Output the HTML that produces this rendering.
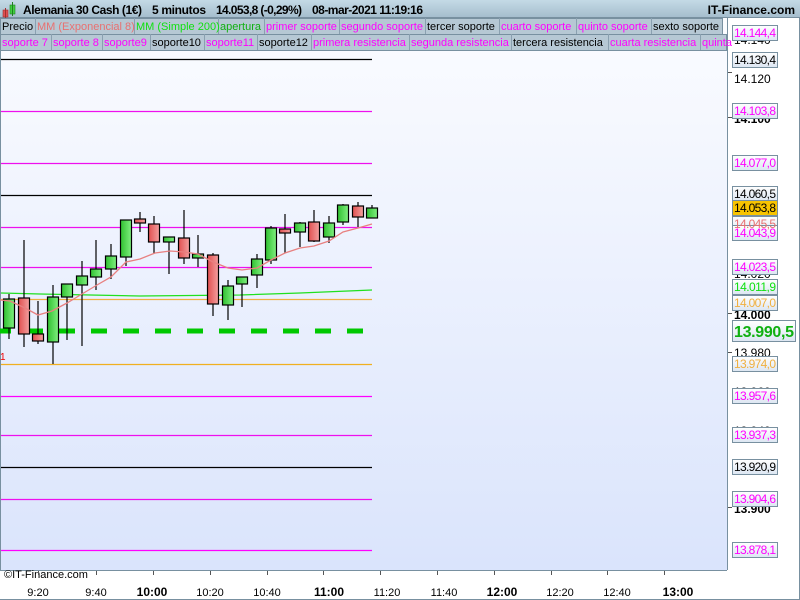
<!DOCTYPE html>
<html><head><meta charset="utf-8"><style>
html,body{margin:0;padding:0;width:800px;height:600px;overflow:hidden;background:#fff}
svg{display:block;font-family:"Liberation Sans",sans-serif}
</style></head><body>
<svg width="800" height="600" viewBox="0 0 800 600" xmlns="http://www.w3.org/2000/svg">
<defs>
<linearGradient id="bg" x1="0" y1="0" x2="0" y2="1"><stop offset="0" stop-color="#fbfcff"/><stop offset="1" stop-color="#dae4fc"/></linearGradient>
<linearGradient id="hd" x1="0" y1="0" x2="0" y2="1"><stop offset="0" stop-color="#c4dae6"/><stop offset="1" stop-color="#a4bccc"/></linearGradient>
<linearGradient id="gc" x1="0" y1="0" x2="1" y2="0"><stop offset="0" stop-color="#30c030"/><stop offset="1" stop-color="#80f080"/></linearGradient>
<linearGradient id="rc" x1="0" y1="0" x2="1" y2="0"><stop offset="0" stop-color="#e05050"/><stop offset="1" stop-color="#f4a0a0"/></linearGradient>
<linearGradient id="lb" x1="0" y1="0" x2="0" y2="1"><stop offset="0" stop-color="#ffffff"/><stop offset="1" stop-color="#dce6f2"/></linearGradient>
</defs>
<rect x="0" y="0" width="800" height="600" fill="#fff"/>
<rect x="0" y="18" width="727" height="552" fill="url(#bg)"/>
<line x1="0.5" y1="18" x2="0.5" y2="570" stroke="#7890a0"/>
<line x1="727.5" y1="18" x2="727.5" y2="570" stroke="#7890a0"/>
<line x1="0" y1="570.5" x2="727" y2="570.5" stroke="#7890a0"/>
<line x1="0" y1="599.5" x2="800" y2="599.5" stroke="#7890a0"/>
<line x1="799.5" y1="18" x2="799.5" y2="600" stroke="#7890a0"/>
<!-- header -->
<rect x="0" y="0" width="800" height="18" fill="url(#hd)"/>
<line x1="0" y1="17.5" x2="800" y2="17.5" stroke="#7890a0"/>
<rect x="3" y="10" width="5" height="7" fill="#e05050" stroke="#a03030" stroke-width="0.6"/><line x1="5.5" y1="8" x2="5.5" y2="18" stroke="#a03030"/>
<rect x="10" y="5" width="5" height="9" fill="#40d040" stroke="#208020" stroke-width="0.6"/><line x1="12.5" y1="2" x2="12.5" y2="16" stroke="#208020"/>
<g font-size="12" font-weight="bold" fill="#000">
<text x="23" y="14" textLength="119">Alemania 30 Cash (1€)</text>
<text x="152" y="14" textLength="54">5 minutos</text>
<text x="216" y="14" textLength="86">14.053,8 (-0,29%)</text>
<text x="312" y="14" textLength="111">08-mar-2021 11:19:16</text>
<text x="795" y="14" text-anchor="end">IT-Finance.com</text>
</g>
<!-- legend rows -->
<g stroke="#7890a0" stroke-width="1">
<rect x="0.5" y="18.5" width="722" height="16" fill="#b6c8d4"/>
<rect x="0.5" y="34.5" width="726" height="16" fill="#b6c8d4"/>
</g>
<g stroke="#8aa0b0">
<line x1="35.5" y1="18" x2="35.5" y2="34"/><line x1="134.5" y1="18" x2="134.5" y2="34"/><line x1="218.5" y1="18" x2="218.5" y2="34"/><line x1="264.5" y1="18" x2="264.5" y2="34"/><line x1="339.5" y1="18" x2="339.5" y2="34"/><line x1="425.5" y1="18" x2="425.5" y2="34"/><line x1="499.5" y1="18" x2="499.5" y2="34"/><line x1="576.5" y1="18" x2="576.5" y2="34"/><line x1="651.5" y1="18" x2="651.5" y2="34"/>
<line x1="51.5" y1="34" x2="51.5" y2="50"/><line x1="102.5" y1="34" x2="102.5" y2="50"/><line x1="150.5" y1="34" x2="150.5" y2="50"/><line x1="204.5" y1="34" x2="204.5" y2="50"/><line x1="257.5" y1="34" x2="257.5" y2="50"/><line x1="311.5" y1="34" x2="311.5" y2="50"/><line x1="409.5" y1="34" x2="409.5" y2="50"/><line x1="511.5" y1="34" x2="511.5" y2="50"/><line x1="608.5" y1="34" x2="608.5" y2="50"/><line x1="700.5" y1="34" x2="700.5" y2="50"/>
</g>
<g font-size="11">
<text x="2" y="30" fill="#000">Precio</text>
<text x="37" y="30" fill="#e87070">MM (Exponencial 8)</text>
<text x="136" y="30" fill="#10e010">MM (Simple 200)</text>
<text x="220" y="30" fill="#10b010">apertura</text>
<text x="266" y="30" fill="#ff00ff">primer soporte</text>
<text x="341" y="30" fill="#ff00ff">segundo soporte</text>
<text x="427" y="30" fill="#000">tercer soporte</text>
<text x="501" y="30" fill="#ff00ff">cuarto soporte</text>
<text x="578" y="30" fill="#ff00ff">quinto soporte</text>
<text x="653" y="30" fill="#000">sexto soporte</text>
<text x="2" y="46" fill="#ff00ff">soporte 7</text>
<text x="53" y="46" fill="#ff00ff">soporte 8</text>
<text x="104" y="46" fill="#ff00ff">soporte9</text>
<text x="152" y="46" fill="#000">soporte10</text>
<text x="206" y="46" fill="#ff00ff">soporte11</text>
<text x="259" y="46" fill="#000">soporte12</text>
<text x="313" y="46" fill="#ff00ff">primera resistencia</text>
<text x="411" y="46" fill="#ff00ff">segunda resistencia</text>
<text x="513" y="46" fill="#000">tercera resistencia</text>
<text x="610" y="46" fill="#ff00ff">cuarta resistencia</text>
<text x="702" y="46" fill="#ff00ff">quinta</text>
</g>
<!-- horizontal level lines -->
<g stroke-width="1.2">
<line x1="1" y1="59.5" x2="372" y2="59.5" stroke="#000"/>
<line x1="1" y1="111.5" x2="372" y2="111.5" stroke="#ee10ee"/>
<line x1="1" y1="163.5" x2="372" y2="163.5" stroke="#ee10ee"/>
<line x1="1" y1="195.5" x2="372" y2="195.5" stroke="#000"/>
<line x1="1" y1="227.5" x2="372" y2="227.5" stroke="#ee10ee"/>
<line x1="1" y1="267.5" x2="372" y2="267.5" stroke="#ee10ee"/>
<line x1="1" y1="299.5" x2="372" y2="299.5" stroke="#f0b040"/>
<line x1="1" y1="364.5" x2="372" y2="364.5" stroke="#f0b020"/>
<line x1="1" y1="396.5" x2="372" y2="396.5" stroke="#ff00ff"/>
<line x1="1" y1="435.5" x2="372" y2="435.5" stroke="#ee10ee"/>
<line x1="1" y1="467.5" x2="372" y2="467.5" stroke="#000"/>
<line x1="1" y1="499.5" x2="372" y2="499.5" stroke="#ee10ee"/>
<line x1="1" y1="550.5" x2="372" y2="550.5" stroke="#ff00ff"/>
</g>
<line x1="0" y1="331" x2="364" y2="331" stroke="#00c800" stroke-width="5" stroke-dasharray="16 16" stroke-dashoffset="5"/>
<text x="0" y="360" font-size="10" fill="#f00000">1</text>
<polyline fill="none" stroke="#20e020" stroke-width="1.3" points="1,293 40,294 140,296 240,295 300,293 372,290"/>
<!-- candles -->
<g stroke="#000" stroke-width="1.2">
<line x1="9" y1="294" x2="9" y2="339"/><rect x="3.5" y="299" width="11" height="29" fill="url(#gc)"/>
<line x1="24" y1="240" x2="24" y2="347"/><rect x="18.5" y="298" width="11" height="36" fill="url(#rc)"/>
<line x1="38" y1="301" x2="38" y2="344"/><rect x="32.5" y="334" width="11" height="7" fill="url(#rc)"/>
<line x1="53" y1="285" x2="53" y2="364"/><rect x="47.5" y="297" width="11" height="45" fill="url(#gc)"/>
<line x1="67" y1="284" x2="67" y2="340"/><rect x="61.5" y="284" width="11" height="13" fill="url(#gc)"/>
<line x1="82" y1="261" x2="82" y2="346"/><rect x="76.5" y="276" width="11" height="9" fill="url(#gc)"/>
<line x1="96" y1="240" x2="96" y2="290"/><rect x="90.5" y="269" width="11" height="8" fill="url(#gc)"/>
<line x1="111" y1="244" x2="111" y2="279"/><rect x="105.5" y="256" width="11" height="13" fill="url(#gc)"/>
<line x1="126" y1="220" x2="126" y2="266"/><rect x="120.5" y="220" width="11" height="37" fill="url(#gc)"/>
<line x1="140" y1="212" x2="140" y2="232"/><rect x="134.5" y="219" width="11" height="4" fill="url(#rc)"/>
<line x1="154" y1="216" x2="154" y2="253"/><rect x="148.5" y="224" width="11" height="18" fill="url(#rc)"/>
<line x1="169" y1="237" x2="169" y2="274"/><rect x="163.5" y="237" width="11" height="5" fill="url(#gc)"/>
<line x1="184" y1="210" x2="184" y2="264"/><rect x="178.5" y="238" width="11" height="20" fill="url(#rc)"/>
<line x1="198" y1="235" x2="198" y2="267"/><rect x="192.5" y="254" width="11" height="4" fill="url(#gc)"/>
<line x1="213" y1="253" x2="213" y2="316"/><rect x="207.5" y="255" width="11" height="49" fill="url(#rc)"/>
<line x1="228" y1="280" x2="228" y2="320"/><rect x="222.5" y="286" width="11" height="19" fill="url(#gc)"/>
<line x1="242" y1="277" x2="242" y2="307"/><rect x="236.5" y="277" width="11" height="7" fill="url(#gc)"/>
<line x1="257" y1="254" x2="257" y2="288"/><rect x="251.5" y="259" width="11" height="16" fill="url(#gc)"/>
<line x1="271" y1="226" x2="271" y2="264"/><rect x="265.5" y="228" width="11" height="32" fill="url(#gc)"/>
<line x1="285" y1="214" x2="285" y2="253"/><rect x="279.5" y="229" width="11" height="4" fill="url(#rc)"/>
<line x1="300" y1="222" x2="300" y2="247"/><rect x="294.5" y="223" width="11" height="9" fill="url(#gc)"/>
<line x1="314" y1="210" x2="314" y2="242"/><rect x="308.5" y="222" width="11" height="19" fill="url(#rc)"/>
<line x1="329" y1="216" x2="329" y2="243"/><rect x="323.5" y="223" width="11" height="14" fill="url(#gc)"/>
<line x1="343" y1="204" x2="343" y2="225"/><rect x="337.5" y="205" width="11" height="17" fill="url(#gc)"/>
<line x1="358" y1="202" x2="358" y2="227"/><rect x="352.5" y="206" width="11" height="11" fill="url(#rc)"/>
<line x1="372" y1="205" x2="372" y2="218"/><rect x="366.5" y="208" width="11" height="10" fill="url(#gc)"/>
</g>
<polyline fill="none" stroke="#e88080" stroke-width="1.3" points="0,300 10,301 25,308 38,315 52,311 67,303 82,294 97,285 111,277 126,262 140,259 155,253 170,251 184,252 198,254 213,262 228,268 242,270 257,268 271,260 285,253 300,248 314,246 329,241 343,232 358,228 372,224"/>
<text x="4" y="578" font-size="11" fill="#000">©IT-Finance.com</text>
<!-- right axis ticks & plain labels -->
<g stroke="#555">
<line x1="728" y1="72.5" x2="732" y2="72.5"/><line x1="728" y1="117.5" x2="732" y2="117.5"/><line x1="728" y1="313.5" x2="732" y2="313.5"/><line x1="728" y1="352.5" x2="732" y2="352.5"/><line x1="728" y1="507.5" x2="732" y2="507.5"/>
</g>
<g font-size="12" fill="#000">
<text x="734" y="44">14.140</text>
<text x="734" y="83">14.120</text>
<text x="734" y="123" font-weight="bold">14.100</text>
<text x="734" y="278">14.020</text>
<text x="734" y="319" font-weight="bold">14.000</text>
<text x="734" y="357">13.980</text>
<text x="734" y="396">13.960</text>
<text x="734" y="435">13.940</text>
<text x="734" y="513" font-weight="bold">13.900</text>
</g>
<!-- boxed labels -->
<g font-size="12" stroke-width="1">
<g stroke="#7890a0">
<rect x="732.5" y="25.5" width="45" height="15" fill="url(#lb)"/>
<rect x="732.5" y="52.5" width="45" height="15" fill="url(#lb)"/>
<rect x="732.5" y="103.5" width="45" height="15" fill="url(#lb)"/>
<rect x="732.5" y="155.5" width="45" height="15" fill="url(#lb)"/>
<rect x="732.5" y="186.5" width="45" height="15" fill="url(#lb)"/>
<rect x="732.5" y="200.5" width="45" height="15" fill="#f8c400"/>
<rect x="732.5" y="216.5" width="45" height="15" fill="url(#lb)"/>
<rect x="732.5" y="225.5" width="45" height="15" fill="url(#lb)"/>
<rect x="732.5" y="259.5" width="45" height="15" fill="url(#lb)"/>
<rect x="732.5" y="279.5" width="45" height="15" fill="url(#lb)"/>
<rect x="732.5" y="295.5" width="45" height="15" fill="url(#lb)"/>
<rect x="732.5" y="320.5" width="63" height="21" fill="url(#lb)"/>
<rect x="732.5" y="356.5" width="45" height="15" fill="url(#lb)"/>
<rect x="732.5" y="388.5" width="45" height="15" fill="url(#lb)"/>
<rect x="732.5" y="427.5" width="45" height="15" fill="url(#lb)"/>
<rect x="732.5" y="459.5" width="45" height="15" fill="url(#lb)"/>
<rect x="732.5" y="491.5" width="45" height="15" fill="url(#lb)"/>
<rect x="732.5" y="542.5" width="45" height="15" fill="url(#lb)"/>
</g>
<g stroke="none">
<text x="734" y="37" fill="#ff00ff" textLength="42">14.144,4</text>
<text x="734" y="64" fill="#000" textLength="42">14.130,4</text>
<text x="734" y="115" fill="#ff00ff" textLength="42">14.103,8</text>
<text x="734" y="167" fill="#ff00ff" textLength="42">14.077,0</text>
<text x="734" y="198" fill="#000" textLength="42">14.060,5</text>
<text x="734" y="212" fill="#000" textLength="42">14.053,8</text>
<text x="734" y="228" fill="#e87070" textLength="42">14.045,5</text>
<text x="734" y="237" fill="#ff00ff" textLength="42">14.043,9</text>
<text x="734" y="271" fill="#ff00ff" textLength="42">14.023,5</text>
<text x="734" y="291" fill="#10e010" textLength="42">14.011,9</text>
<text x="734" y="307" fill="#f0b040" textLength="42">14.007,0</text>
<text x="734" y="337" fill="#10b010" font-size="16" font-weight="bold" textLength="60">13.990,5</text>
<text x="734" y="368" fill="#f0b040" textLength="42">13.974,0</text>
<text x="734" y="400" fill="#ff00ff" textLength="42">13.957,6</text>
<text x="734" y="439" fill="#ff00ff" textLength="42">13.937,3</text>
<text x="734" y="471" fill="#000" textLength="42">13.920,9</text>
<text x="734" y="503" fill="#ff00ff" textLength="42">13.904,6</text>
<text x="734" y="554" fill="#ff00ff" textLength="42">13.878,1</text>
</g>
</g>
<!-- bottom axis -->
<g stroke="#555">
<line x1="38.5" y1="571" x2="38.5" y2="575"/><line x1="96.5" y1="571" x2="96.5" y2="575"/><line x1="153.5" y1="571" x2="153.5" y2="575"/><line x1="210.5" y1="571" x2="210.5" y2="575"/><line x1="267.5" y1="571" x2="267.5" y2="575"/><line x1="323.5" y1="571" x2="323.5" y2="575"/><line x1="380.5" y1="571" x2="380.5" y2="575"/><line x1="437.5" y1="571" x2="437.5" y2="575"/><line x1="494.5" y1="571" x2="494.5" y2="575"/><line x1="551.5" y1="571" x2="551.5" y2="575"/><line x1="607.5" y1="571" x2="607.5" y2="575"/><line x1="664.5" y1="571" x2="664.5" y2="575"/>
</g>
<g font-size="11" fill="#000" text-anchor="middle">
<text x="38" y="596">9:20</text><text x="96" y="596">9:40</text>
<text x="152" y="596" font-weight="bold" font-size="12">10:00</text>
<text x="210" y="596">10:20</text><text x="267" y="596">10:40</text>
<text x="329" y="596" font-weight="bold" font-size="12">11:00</text>
<text x="387" y="596">11:20</text><text x="444" y="596">11:40</text>
<text x="502" y="596" font-weight="bold" font-size="12">12:00</text>
<text x="560" y="596">12:20</text><text x="617" y="596">12:40</text>
<text x="678" y="596" font-weight="bold" font-size="12">13:00</text>
</g>
</svg>
</body></html>
